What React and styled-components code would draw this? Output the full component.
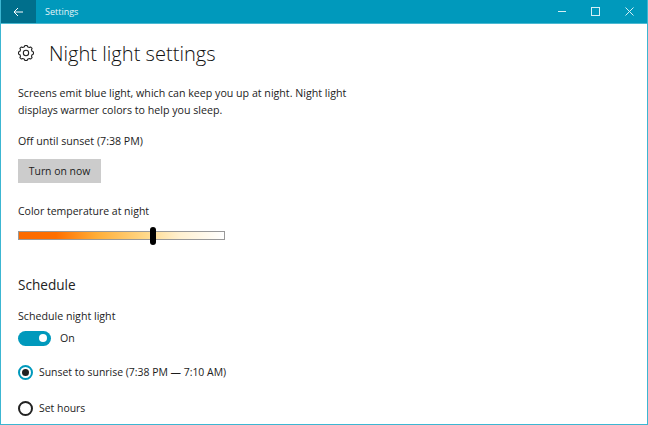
import React from "react";
import styled, { createGlobalStyle } from "styled-components";

const Global = createGlobalStyle`
  html, body { margin: 0; padding: 0; background: #fff; }
  body { font-family: "Open Sans", "Noto Sans", sans-serif; color: #1c1c1c; }
`;
const Window = styled.div`
  width: 648px; height: 425px; box-sizing: border-box; overflow: hidden;
  border: 1px solid #3cb6d2; border-top: 0; display: flex; flex-direction: column; background: #fff;
`;
const TitleBar = styled.div`
  height: 23px; flex: none; background: #0099bc; display: flex; align-items: center; color: #fff;
  border-bottom: 1px solid #4bb9d2;
`;
const BackButton = styled.div`
  width: 35px; height: 23px; background: #006f8c; display: flex; align-items: center; justify-content: center;
`;
const AppName = styled.div`
  margin-left: 9px; font-size: 9px; line-height: 23px; flex: 1; color: #e4f4f8;
`;
const WinButton = styled.div`
  width: 34px; height: 23px; display: flex; align-items: center; justify-content: center;
  margin-right: ${p => p.$mr || 0}px;
`;
const Content = styled.div`
  padding: 0 0 0 17px; display: flex; flex-direction: column; align-items: flex-start;
`;
const Header = styled.div`
  display: flex; align-items: center; height: 30px; margin-top: 15px;
`;
const Gear = styled.svg`
  width: 16px; height: 16px; margin-bottom: 3px; fill: none; stroke: #222; stroke-width: 1.6; stroke-linejoin: round;
`;
const Title = styled.h1`
  margin: 0 0 0 15px; font-size: 20.1px; font-weight: 300; line-height: 30px; color: #111;
`;
const Paragraph = styled.p`
  margin: ${p => p.$mt}px 0 0; font-size: ${p => p.$size || 10.65}px; line-height: 17px; color: #1c1c1c; white-space: pre-line;
`;
const Button = styled.div`
  margin-top: 9px; width: 83px; height: 24px; background: #cccccc; font-size: 10.4px; line-height: 24px;
  text-align: center; color: #1c1c1c;
`;
const Slider = styled.div`
  position: relative; margin-top: 11px; width: 207px; height: 9px; box-sizing: border-box;
  border: 1px solid #999;
  background: linear-gradient(to right, #fb6a00 0%, #ff6f00 18%, #ffae38 38%, #ffd98a 62%, #fff0cf 78%, #ffffff 100%);
`;
const Thumb = styled.div`
  position: absolute; left: 131px; top: -5px; width: 6px; height: 18px; border-radius: 3px; background: #000;
`;
const Section = styled.h2`
  margin: 35px 0 0; font-size: 13.6px; font-weight: 400; line-height: 20px; color: #222;
`;
const ToggleRow = styled.div`
  display: flex; align-items: center; margin-top: 5px; height: 16px; font-size: 10.65px;
`;
const Toggle = styled.div`
  width: 33px; height: 15px; border-radius: 8px; background: #0099bc; position: relative; margin-right: 9px;
`;
const Knob = styled.div`
  position: absolute; right: 4px; top: 3.5px; width: 8px; height: 8px; border-radius: 50%; background: #fff;
`;
const RadioRow = styled.div`
  display: flex; align-items: center; height: 16px; margin-top: ${p => p.$mt}px; font-size: 10.45px;
`;
const Radio = styled.div`
  width: 15px; height: 15px; box-sizing: border-box; border-radius: 50%; margin-right: 6px;
  border: 2px solid ${p => (p.$on ? "#0099bc" : "#222")};
  display: flex; align-items: center; justify-content: center;
  &::after { content: ""; display: ${p => (p.$on ? "block" : "none")}; width: 7px; height: 7px; border-radius: 50%; background: #222; }
`;

const gearPath = (() => {
  const pts = [];
  const n = 8;
  for (let i = 0; i < n; i++) {
    const a = (i * 2 * Math.PI) / n - Math.PI / 2;
    const w = Math.PI / n;
    [[9.6, -0.62], [11.4, -0.36], [11.4, 0.36], [9.6, 0.62]].forEach(([r, k]) => {
      const t = a + k * w;
      pts.push(`${(12 + r * Math.cos(t)).toFixed(2)} ${(12 + r * Math.sin(t)).toFixed(2)}`);
    });
  }
  return "M" + pts.join("L") + "Z";
})();

export default function App() {
  return (
    <>
      <Global />
      <Window>
        <TitleBar>
          <BackButton>
            <svg width="11" height="10" viewBox="0 0 11 10" fill="none" stroke="#fff" strokeWidth="1">
              <path d="M10 5H1M5 1L1 5l4 4" />
            </svg>
          </BackButton>
          <AppName>Settings</AppName>
          <WinButton>
            <svg width="9" height="9" viewBox="0 0 9 9" stroke="#d5eff5" fill="none"><path d="M1 4.5h8" /></svg>
          </WinButton>
          <WinButton>
            <svg width="9" height="9" viewBox="0 0 9 9" stroke="#d5eff5" fill="none"><rect x="0.5" y="0.5" width="8" height="8" /></svg>
          </WinButton>
          <WinButton $mr={1}>
            <svg width="9" height="9" viewBox="0 0 9 9" stroke="#d5eff5" fill="none"><path d="M.5.5l8 8M8.5.5l-8 8" /></svg>
          </WinButton>
        </TitleBar>
        <Content>
          <Header>
            <Gear viewBox="0 0 24 24">
              <path d={gearPath} />
              <circle cx="12" cy="12" r="4" />
            </Gear>
            <Title>Night light settings</Title>
          </Header>
          <Paragraph $mt={16}>{"Screens emit blue light, which can keep you up at night. Night light\ndisplays warmer colors to help you sleep."}</Paragraph>
          <Paragraph $mt={14}>Off until sunset (7:38 PM)</Paragraph>
          <Button>Turn on now</Button>
          <Paragraph $mt={20} $size={10.5}>Color temperature at night</Paragraph>
          <Slider><Thumb /></Slider>
          <Section>Schedule</Section>
          <Paragraph $mt={13}>Schedule night light</Paragraph>
          <ToggleRow>
            <Toggle><Knob /></Toggle>On
          </ToggleRow>
          <RadioRow $mt={18}><Radio $on />Sunset to sunrise (7:38 PM — 7:10 AM)</RadioRow>
          <RadioRow $mt={20}><Radio />Set hours</RadioRow>
        </Content>
      </Window>
    </>
  );
}
